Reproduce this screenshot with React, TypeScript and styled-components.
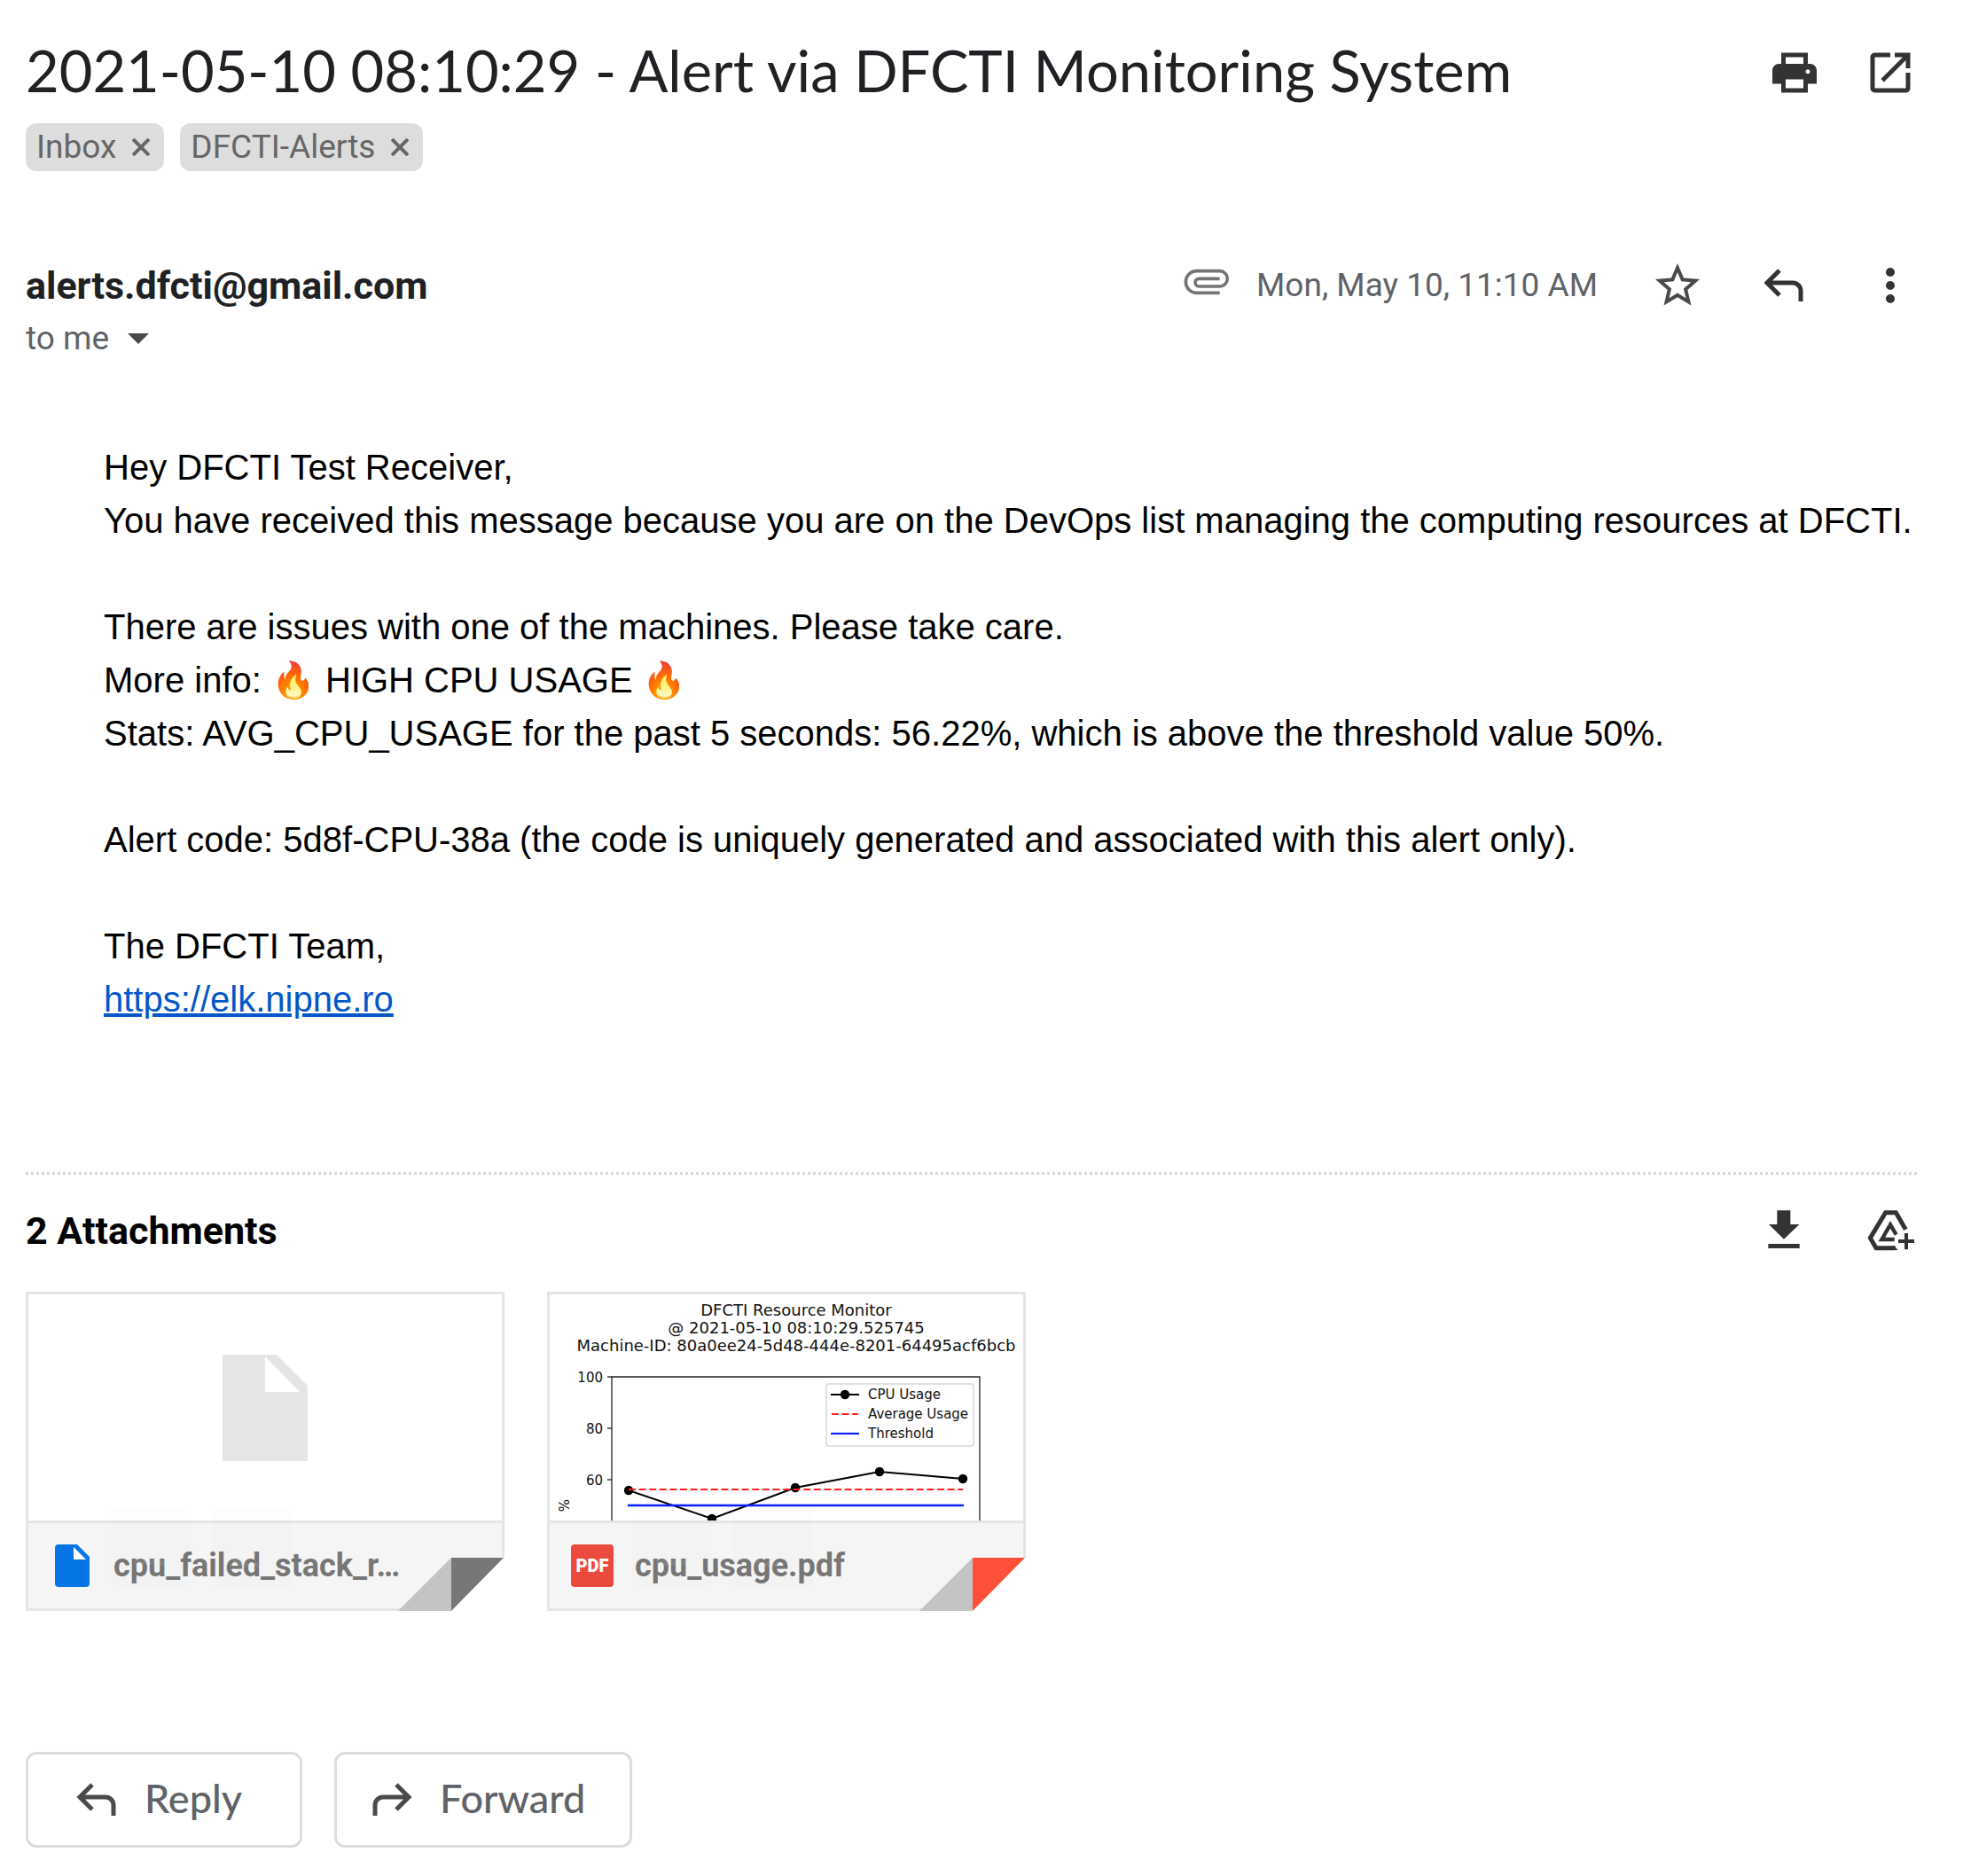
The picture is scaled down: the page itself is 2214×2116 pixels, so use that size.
import React from "react";
import styled, { createGlobalStyle } from "styled-components";

const GlobalStyle = createGlobalStyle`
  *, *::before, *::after { box-sizing: border-box; }
  body {
    margin: 0;
    background: #fff;
    color: #202124;
    font-family: Roboto, "Liberation Sans", sans-serif;
  }
  h1, h2, p { margin: 0; }
  svg { display: block; flex: none; }
  button {
    margin: 0;
    padding: 0;
    border: 0;
    background: none;
    color: inherit;
    font: inherit;
    cursor: pointer;
  }
`;

const Page = styled.main`
  display: flex;
  flex-direction: column;
  padding: 39px 52px 32px 29px;
`;

const SubjectRow = styled.header`
  display: flex;
  align-items: flex-start;
  justify-content: space-between;
`;

const Subject = styled.h1`
  font: 400 65px/80px Lato, "Open Sans", sans-serif;
`;

const SubjectActions = styled.div`
  display: flex;
  gap: 48px;
  padding-top: 13px;
`;

const IconButton = styled.button<{ $tone?: string }>`
  width: 60px;
  height: 60px;
  color: ${(p) => p.$tone ?? "#333"};
`;

const Labels = styled.div`
  display: flex;
  gap: 18px;
  margin-top: 20px;
`;

const Label = styled.span`
  display: flex;
  align-items: center;
  gap: 18px;
  height: 54px;
  padding: 0 16px 0 12px;
  border-radius: 12px;
  background: #ddd;
  color: #666;
  font-size: 37px;
  line-height: 56px;
`;

const SenderRow = styled.div`
  display: flex;
  align-items: center;
  justify-content: space-between;
  margin-top: 99px;
`;

const Sender = styled.h2`
  font-size: 43px;
  font-weight: 700;
  line-height: 60px;
`;

const SenderActions = styled.div`
  display: flex;
  align-items: center;
  gap: 60px;
`;

const Sent = styled.div`
  display: flex;
  align-items: center;
  gap: 30px;
  color: #5f6368;
  font-size: 37px;
  line-height: 60px;
`;

const ClipIcon = styled.svg`
  margin-bottom: 8px;
`;

const Recipient = styled.button`
  display: flex;
  align-items: center;
  align-self: flex-start;
  gap: 21px;
  color: #5f6368;
  font-size: 37px;
  line-height: 60px;
`;

const Message = styled.section`
  margin-top: 85px;
  padding-left: 88px;
  color: #000;
  font: 40px/60px "Liberation Sans", Arial, "Noto Color Emoji", sans-serif;
`;

const Paragraph = styled.p`
  & + & { margin-top: 60px; }
`;

const Line = styled.span`
  display: block;
  height: 60px;
  white-space: nowrap;
`;

const SiteLink = styled.a`
  color: #0357c9;
  text-decoration: underline;
`;

const Attachments = styled.section`
  margin-top: 165px;
  border-top: 3px dotted #d8d8d8;
`;

const AttachmentsHead = styled.div`
  display: flex;
  align-items: center;
  justify-content: space-between;
  margin-top: 33px;
  color: #000;
`;

const AttachmentActions = styled.div`
  display: flex;
  gap: 60px;
`;

const Cards = styled.div`
  display: flex;
  gap: 48px;
  margin-top: 39px;
`;

const Card = styled.article`
  position: relative;
  width: 540px;
  border: 3px solid #e5e5e5;
`;

const Preview = styled.div`
  display: flex;
  align-items: center;
  justify-content: center;
  height: 255px;
  overflow: hidden;
`;

const CardFooter = styled.div`
  display: flex;
  align-items: center;
  gap: 24px;
  height: 99px;
  padding: 0 96px 0 24px;
  border-top: 3px solid #e5e5e5;
  background: #f5f5f5;
  color: #777;
`;

const FileType = styled.span`
  display: flex;
  justify-content: center;
  width: 48px;
  flex: none;
  padding-left: 3px;
`;

const PdfBadge = styled.span`
  width: 48px;
  flex: none;
  border-radius: 4px;
  background: #eb4a3f;
  color: #fff;
  font-size: 20px;
  font-weight: 900;
  line-height: 48px;
  text-align: center;
`;

const FileName = styled.span`
  font-size: 36px;
  font-weight: 700;
  line-height: 48px;
  white-space: nowrap;
`;

const Corner = styled.svg`
  position: absolute;
  right: -3px;
  bottom: -3px;
`;

const CardActions = styled.div`
  position: absolute;
  top: 240px;
  left: 93px;
  display: flex;
  gap: 24px;
`;

const CardAction = styled.button`
  display: grid;
  place-items: center;
  width: 90px;
  height: 90px;
  border-radius: 6px;
  background: rgba(0, 0, 0, 0.008);
  color: rgba(255, 255, 255, 0.08);
`;

const Replies = styled.div`
  display: flex;
  gap: 36px;
  margin-top: 159px;
`;

const ReplyButton = styled.button`
  display: flex;
  align-items: center;
  justify-content: center;
  gap: 24px;
  min-width: 312px;
  height: 108px;
  padding: 0 50px 0 32px;
  border: 3px solid #dadce0;
  border-radius: 12px;
  color: #4a4a4a;
`;

const ReplyText = styled.span`
  padding-bottom: 4px;
  color: #5f6368;
  font: 500 45px/60px Lato, "Open Sans", sans-serif;
`;

const MaterialIcon = ({ d }: { d: string }) => (
  <svg width="60" height="60" viewBox="0 0 24 24" fill="currentColor" aria-hidden="true">
    <path d={d} />
  </svg>
);

const ReplyArrow = ({ flip = false }: { flip?: boolean }) => (
  <svg width="60" height="60" viewBox="0 0 60 60" fill="none" stroke="currentColor" strokeWidth="5" aria-hidden="true">
    <g transform={flip ? "translate(60 0) scale(-1 1)" : undefined}>
      <path d="M25 13L11 27L25 41M11 27H40A9 9 0 0 1 49 36V48" />
    </g>
  </svg>
);

const DownloadIcon = () => (
  <svg width="60" height="60" viewBox="0 0 180 180" fill="currentColor" aria-hidden="true">
    <path d="M67 22h45v47h30L90 119 39 69h28zM37 135h106v15H37z" />
  </svg>
);

const DriveIcon = () => (
  <svg width="60" height="60" viewBox="0 0 180 180" fill="none" stroke="currentColor" aria-hidden="true">
    <path strokeWidth="15" d="M142 86L109 29H74L22 115L42 149H107" />
    <path fill="currentColor" stroke="none" d="M102 141L116 156H100V141Z" />
    <path strokeWidth="13" d="M110 104L90 70L61 120H104" />
    <path strokeWidth="12" d="M117 126H171M144 99V154" />
  </svg>
);

const CloseIcon = () => (
  <svg width="20" height="20" viewBox="0 0 20 20" stroke="currentColor" strokeWidth="4" aria-hidden="true">
    <path d="M1 1L19 19M19 1L1 19" />
  </svg>
);

const Fold = ({ color }: { color: string }) => (
  <Corner width="120" height="60" viewBox="0 0 120 60" aria-hidden="true">
    <path fill="#fff" d="M60 0H120V60H60Z" />
    <path fill="#c4c4c4" d="M0 60L60 0V60Z" />
    <path fill={color} d="M60 0H119L60 60Z" />
  </Corner>
);

const HoverActions = () => (
  <CardActions>
    <CardAction aria-label="Download">
      <DownloadIcon />
    </CardAction>
    <CardAction aria-label="Add to Drive">
      <DriveIcon />
    </CardAction>
  </CardActions>
);

const usage: [number, number][] = [
  [89, 221],
  [183, 253],
  [277, 218],
  [372, 200],
  [466, 208],
];

const ticks: [string, number][] = [
  ["100", 93],
  ["80", 151],
  ["60", 209],
];

const UsageChart = () => (
  <svg width="534" height="255" viewBox="0 0 534 255" fontFamily='"DejaVu Sans", sans-serif' role="img" aria-label="CPU usage chart">
    <g fontSize="18" textAnchor="middle" fill="#111">
      <text x="278" y="24">DFCTI Resource Monitor</text>
      <text x="278" y="44">@ 2021-05-10 08:10:29.525745</text>
      <text x="278" y="64">Machine-ID: 80a0ee24-5d48-444e-8201-64495acf6bcb</text>
    </g>
    <path d="M70 260V93H485V260" fill="none" stroke="#222" strokeWidth="1.3" />
    <g fontSize="15" fill="#111">
      {ticks.map(([label, y]) => (
        <g key={label}>
          <path d={`M65 ${y}H70`} stroke="#222" strokeWidth="1.3" />
          <text x="60" y={y + 6} textAnchor="end">{label}</text>
        </g>
      ))}
      <text transform="translate(22 238) rotate(-90)" textAnchor="middle">%</text>
    </g>
    <polyline points={usage.map((p) => p.join(",")).join(" ")} fill="none" stroke="#000" strokeWidth="2" />
    {usage.map(([x, y]) => (
      <circle key={x} cx={x} cy={y} r="5.2" />
    ))}
    <path d="M89 220H466" stroke="#ff2020" strokeWidth="2.2" strokeDasharray="8 3.6" />
    <path d="M88 238H467" stroke="#0a1eff" strokeWidth="2.4" />
    <rect x="312" y="101" width="166" height="70" rx="3" fill="#fff" stroke="#d8d8d8" strokeWidth="1.5" />
    <path d="M317 113H349" stroke="#000" strokeWidth="2" />
    <circle cx="333" cy="113" r="5.2" />
    <path d="M318 135H348" stroke="#ff2020" strokeWidth="2.2" strokeDasharray="8 3.6" />
    <path d="M317 157H349" stroke="#0a1eff" strokeWidth="2.2" />
    <g fontSize="15" fill="#111">
      <text x="359" y="118">CPU Usage</text>
      <text x="359" y="140">Average Usage</text>
      <text x="359" y="162">Threshold</text>
    </g>
  </svg>
);

export default function App() {
  return (
    <>
      <GlobalStyle />
      <Page>
        <SubjectRow>
          <Subject>2021-05-10 08:10:29 - Alert via DFCTI Monitoring System</Subject>
          <SubjectActions>
            <IconButton aria-label="Print">
              <MaterialIcon d="M19 8H5c-1.66 0-3 1.34-3 3v6h4v4h12v-4h4v-6c0-1.66-1.34-3-3-3zm-3 11H8v-4h8v4zm2-6.5c-.55 0-1-.45-1-1s.45-1 1-1 1 .45 1 1-.45 1-1 1zM18 3H6v5h12V3zM8 5h8v3H8V5z" />
            </IconButton>
            <IconButton aria-label="Open in new window">
              <MaterialIcon d="M19 19H5V5h7V3H5a2 2 0 0 0-2 2v14a2 2 0 0 0 2 2h14c1.1 0 2-.9 2-2v-7h-2v7zM14 3v2h3.59l-9.83 9.83 1.41 1.41L19 6.41V10h2V3h-7z" />
            </IconButton>
          </SubjectActions>
        </SubjectRow>
        <Labels>
          <Label>
            Inbox
            <button aria-label="Remove label Inbox"><CloseIcon /></button>
          </Label>
          <Label>
            DFCTI-Alerts
            <button aria-label="Remove label DFCTI-Alerts"><CloseIcon /></button>
          </Label>
        </Labels>

        <SenderRow>
          <Sender>alerts.dfcti@gmail.com</Sender>
          <SenderActions>
            <Sent>
              <ClipIcon width="52" height="30" viewBox="46 68 156 90" fill="none" stroke="#757575" strokeWidth="11" aria-hidden="true">
                <path d="M168 150H90A37 37 0 0 1 90 76H168A26 26 0 0 1 168 128H98A13 13 0 0 1 98 102H168" />
              </ClipIcon>
              <time dateTime="2021-05-10T11:10">Mon, May 10, 11:10 AM</time>
            </Sent>
            <IconButton aria-label="Star" $tone="#4a4a4a">
              <MaterialIcon d="M22 9.24l-7.19-.62L12 2 9.19 8.63 2 9.24l5.46 4.73L5.82 21 12 17.27 18.18 21l-1.63-7.03L22 9.24zM12 15.4l-3.76 2.27 1-4.28-3.32-2.88 4.38-.38L12 6.1l1.71 4.04 4.38.38-3.32 2.88 1 4.28L12 15.4z" />
            </IconButton>
            <IconButton aria-label="Reply to sender">
              <ReplyArrow />
            </IconButton>
            <IconButton aria-label="More">
              <MaterialIcon d="M12 8a2 2 0 1 0 0-4 2 2 0 0 0 0 4zm0 2a2 2 0 1 0 0 4 2 2 0 0 0 0-4zm0 6a2 2 0 1 0 0 4 2 2 0 0 0 0-4z" />
            </IconButton>
          </SenderActions>
        </SenderRow>
        <Recipient aria-label="to me, show details">
          to me
          <svg width="24" height="12" viewBox="0 0 24 12" fill="#4a4a4a" aria-hidden="true">
            <path d="M0 0H24L12 12Z" />
          </svg>
        </Recipient>

        <Message>
          <Paragraph>
            <Line>Hey DFCTI Test Receiver,</Line>
            <Line>You have received this message because you are on the DevOps list managing the computing resources at DFCTI.</Line>
          </Paragraph>
          <Paragraph>
            <Line>There are issues with one of the machines. Please take care.</Line>
            <Line>More info: 🔥 HIGH CPU USAGE 🔥</Line>
            <Line>Stats: AVG_CPU_USAGE for the past 5 seconds: 56.22%, which is above the threshold value 50%.</Line>
          </Paragraph>
          <Paragraph>
            <Line>Alert code: 5d8f-CPU-38a (the code is uniquely generated and associated with this alert only).</Line>
          </Paragraph>
          <Paragraph>
            <Line>The DFCTI Team,</Line>
            <Line><SiteLink href="https://elk.nipne.ro">https://elk.nipne.ro</SiteLink></Line>
          </Paragraph>
        </Message>

        <Attachments>
          <AttachmentsHead>
            <Sender as="h2">2 Attachments</Sender>
            <AttachmentActions>
              <IconButton aria-label="Download all attachments">
                <DownloadIcon />
              </IconButton>
              <IconButton aria-label="Add all to Drive">
                <DriveIcon />
              </IconButton>
            </AttachmentActions>
          </AttachmentsHead>
          <Cards>
            <Card>
              <Preview>
                <svg width="96" height="120" viewBox="0 0 96 120" aria-hidden="true">
                  <path fill="#e5e5e5" fillRule="evenodd" d="M0 0H61L96 35V120H0ZM48 2V42H87Z" />
                </svg>
              </Preview>
              <CardFooter>
                <FileType>
                  <svg width="39" height="48" viewBox="0 0 39 48" aria-hidden="true">
                    <path fill="#0675e6" d="M4 0H25L39 14V44A4 4 0 0 1 35 48H4A4 4 0 0 1 0 44V4A4 4 0 0 1 4 0Z" />
                    <path fill="#fff" d="M21 3V17H35Z" />
                  </svg>
                </FileType>
                <FileName>cpu_failed_stack_r…</FileName>
              </CardFooter>
              <HoverActions />
              <Fold color="#777" />
            </Card>
            <Card>
              <Preview>
                <UsageChart />
              </Preview>
              <CardFooter>
                <PdfBadge>PDF</PdfBadge>
                <FileName>cpu_usage.pdf</FileName>
              </CardFooter>
              <HoverActions />
              <Fold color="#ff5139" />
            </Card>
          </Cards>
        </Attachments>

        <Replies>
          <ReplyButton>
            <ReplyArrow />
            <ReplyText>Reply</ReplyText>
          </ReplyButton>
          <ReplyButton>
            <ReplyArrow flip />
            <ReplyText>Forward</ReplyText>
          </ReplyButton>
        </Replies>
      </Page>
    </>
  );
}
